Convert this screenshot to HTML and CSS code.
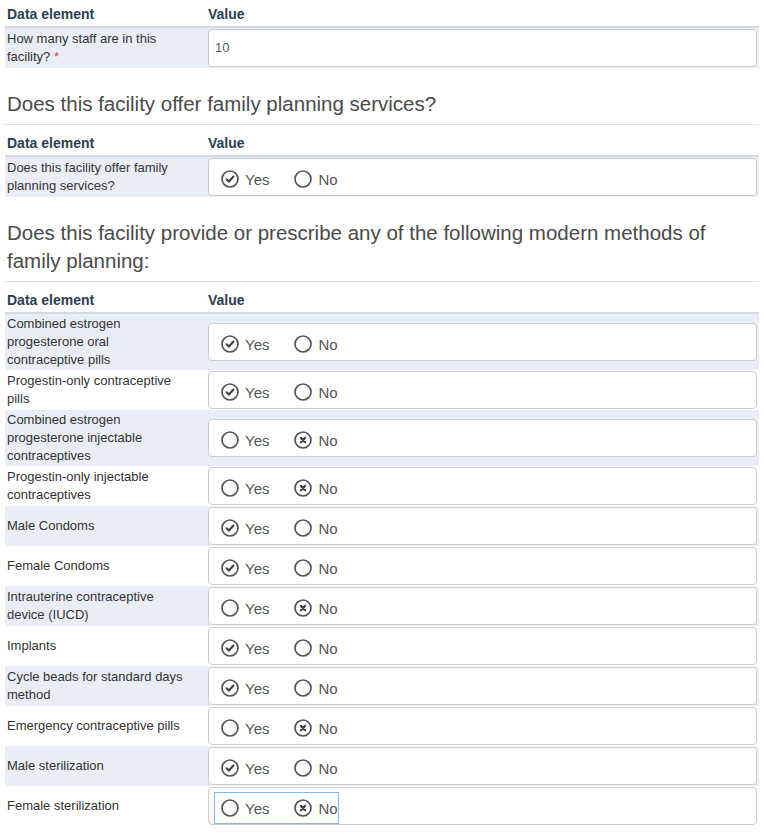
FILE: index.html
```html
<!DOCTYPE html>
<html>
<head>
<meta charset="utf-8">
<link rel="stylesheet" href="styles.css">
</head>
<body>
<svg width="0" height="0" class="defs">
  <defs>
    <symbol id="r-on" viewBox="0 0 18 18"><circle cx="9" cy="9" r="8" fill="none" stroke="#555" stroke-width="1.7"/><path d="M5.6 9.3 L8 11.6 L12.4 6.6" fill="none" stroke="#444" stroke-width="2.2" stroke-linecap="round" stroke-linejoin="round"/></symbol>
    <symbol id="r-x" viewBox="0 0 18 18"><circle cx="9" cy="9" r="8" fill="none" stroke="#555" stroke-width="1.7"/><path d="M6.9 6.9 L11.1 11.1 M11.1 6.9 L6.9 11.1" fill="none" stroke="#444" stroke-width="2.2" stroke-linecap="round"/></symbol>
    <symbol id="r-off" viewBox="0 0 18 18"><circle cx="9" cy="9" r="8" fill="none" stroke="#555" stroke-width="1.7"/></symbol>
  </defs>
</svg>
<div class="page">
  <table class="grid">
    <thead><tr><th class="c-label">Data element</th><th class="c-value">Value</th></tr></thead>
    <tbody>
      <tr class="shade"><td class="label">How many staff are in this facility?&nbsp;<span class="req">*</span></td><td class="value"><div class="box text-box">10</div></td></tr>
    </tbody>
  </table>

  <h3 class="section">Does this facility offer family planning services?</h3>
  <table class="grid">
    <thead><tr><th class="c-label">Data element</th><th class="c-value">Value</th></tr></thead>
    <tbody>
      <tr class="shade"><td class="label">Does this facility offer family planning services?</td><td class="value"><div class="box"><span class="group"><span class="opt"><svg class="ic"><use href="#r-on"/></svg>Yes</span><span class="opt"><svg class="ic"><use href="#r-off"/></svg>No</span></span></div></td></tr>
    </tbody>
  </table>

  <h3 class="section">Does this facility provide or prescribe any of the following modern methods of family planning:</h3>
  <table class="grid">
    <thead><tr><th class="c-label">Data element</th><th class="c-value">Value</th></tr></thead>
    <tbody>
      <tr class="shade"><td class="label">Combined estrogen progesterone oral contraceptive pills</td><td class="value"><div class="box"><span class="group"><span class="opt"><svg class="ic"><use href="#r-on"/></svg>Yes</span><span class="opt"><svg class="ic"><use href="#r-off"/></svg>No</span></span></div></td></tr>
      <tr><td class="label">Progestin-only contraceptive pills</td><td class="value"><div class="box"><span class="group"><span class="opt"><svg class="ic"><use href="#r-on"/></svg>Yes</span><span class="opt"><svg class="ic"><use href="#r-off"/></svg>No</span></span></div></td></tr>
      <tr class="shade"><td class="label">Combined estrogen progesterone injectable contraceptives</td><td class="value"><div class="box"><span class="group"><span class="opt"><svg class="ic"><use href="#r-off"/></svg>Yes</span><span class="opt"><svg class="ic"><use href="#r-x"/></svg>No</span></span></div></td></tr>
      <tr><td class="label">Progestin-only injectable contraceptives</td><td class="value"><div class="box"><span class="group"><span class="opt"><svg class="ic"><use href="#r-off"/></svg>Yes</span><span class="opt"><svg class="ic"><use href="#r-x"/></svg>No</span></span></div></td></tr>
      <tr class="shade"><td class="label">Male Condoms</td><td class="value"><div class="box"><span class="group"><span class="opt"><svg class="ic"><use href="#r-on"/></svg>Yes</span><span class="opt"><svg class="ic"><use href="#r-off"/></svg>No</span></span></div></td></tr>
      <tr><td class="label">Female Condoms</td><td class="value"><div class="box"><span class="group"><span class="opt"><svg class="ic"><use href="#r-on"/></svg>Yes</span><span class="opt"><svg class="ic"><use href="#r-off"/></svg>No</span></span></div></td></tr>
      <tr class="shade"><td class="label">Intrauterine contraceptive device (IUCD)</td><td class="value"><div class="box"><span class="group"><span class="opt"><svg class="ic"><use href="#r-off"/></svg>Yes</span><span class="opt"><svg class="ic"><use href="#r-x"/></svg>No</span></span></div></td></tr>
      <tr><td class="label">Implants</td><td class="value"><div class="box"><span class="group"><span class="opt"><svg class="ic"><use href="#r-on"/></svg>Yes</span><span class="opt"><svg class="ic"><use href="#r-off"/></svg>No</span></span></div></td></tr>
      <tr class="shade"><td class="label">Cycle beads for standard days method</td><td class="value"><div class="box"><span class="group"><span class="opt"><svg class="ic"><use href="#r-on"/></svg>Yes</span><span class="opt"><svg class="ic"><use href="#r-off"/></svg>No</span></span></div></td></tr>
      <tr><td class="label">Emergency contraceptive pills</td><td class="value"><div class="box"><span class="group"><span class="opt"><svg class="ic"><use href="#r-off"/></svg>Yes</span><span class="opt"><svg class="ic"><use href="#r-x"/></svg>No</span></span></div></td></tr>
      <tr class="shade"><td class="label">Male sterilization</td><td class="value"><div class="box"><span class="group"><span class="opt"><svg class="ic"><use href="#r-on"/></svg>Yes</span><span class="opt"><svg class="ic"><use href="#r-off"/></svg>No</span></span></div></td></tr>
      <tr><td class="label">Female sterilization</td><td class="value"><div class="box"><span class="group focus"><span class="opt"><svg class="ic"><use href="#r-off"/></svg>Yes</span><span class="opt"><svg class="ic"><use href="#r-x"/></svg>No</span></span></div></td></tr>
    </tbody>
  </table>
</div>
</body>
</html>
```
FILE: styles.css
```css
html, body {
  margin: 0;
  padding: 0;
  background: #fff;
}
body {
  font-family: "Liberation Sans", Arial, sans-serif;
  font-size: 13px;
  color: #333;
}
.defs {
  position: absolute;
  width: 0;
  height: 0;
  overflow: hidden;
}
.page {
  padding: 0 5px;
  width: 754px;
}
.grid {
  width: 754px;
  border-collapse: collapse;
  table-layout: fixed;
  margin-top: 4px;
}
.grid:first-child {
  margin-top: 0;
}
.grid th {
  box-sizing: border-box;
  text-align: left;
  font-size: 14px;
  font-weight: bold;
  color: #2c3e50;
  line-height: 16px;
  padding: 6px 2px 4px 2px;
  border-bottom: 2px solid #d3dae4;
}
.grid th.c-label {
  width: 198px;
}
.grid th.c-value {
  padding-left: 5px;
}
.shade td {
  background: #e9eef6;
}
.grid td {
  vertical-align: middle;
}
.label {
  padding: 1px 17px 1px 2px;
  line-height: 18px;
  color: #333;
}
.req {
  color: #e74c3c;
}
.value {
  padding: 1px 2px 1px 5px;
}
.box {
  box-sizing: border-box;
  height: 38px;
  border: 1px solid #ccc;
  border-radius: 4px;
  background: #fff;
  padding: 4px 0 0 5px;
}
.text-box {
  padding: 0 0 0 6px;
  line-height: 36px;
  color: #555;
  font-size: 13px;
}
.group {
  display: inline-flex;
  align-items: center;
  gap: 25px;
  box-sizing: border-box;
  height: 32px;
  padding: 0 0 0 6px;
  border: 1px solid transparent;
  font-size: 15px;
  color: #555;
}
.group.focus {
  border-color: #8ab4f8;
}
.opt {
  display: inline-flex;
  align-items: center;
  gap: 6px;
}
.ic {
  width: 18px;
  height: 18px;
  display: block;
}
.section {
  margin: 22px 0 0 0;
  padding: 0 2px 6px 2px;
  font-size: 20.5px;
  font-weight: normal;
  line-height: 28px;
  color: #4a4a4a;
  border-bottom: 1px solid #e3e3e3;
}
```
